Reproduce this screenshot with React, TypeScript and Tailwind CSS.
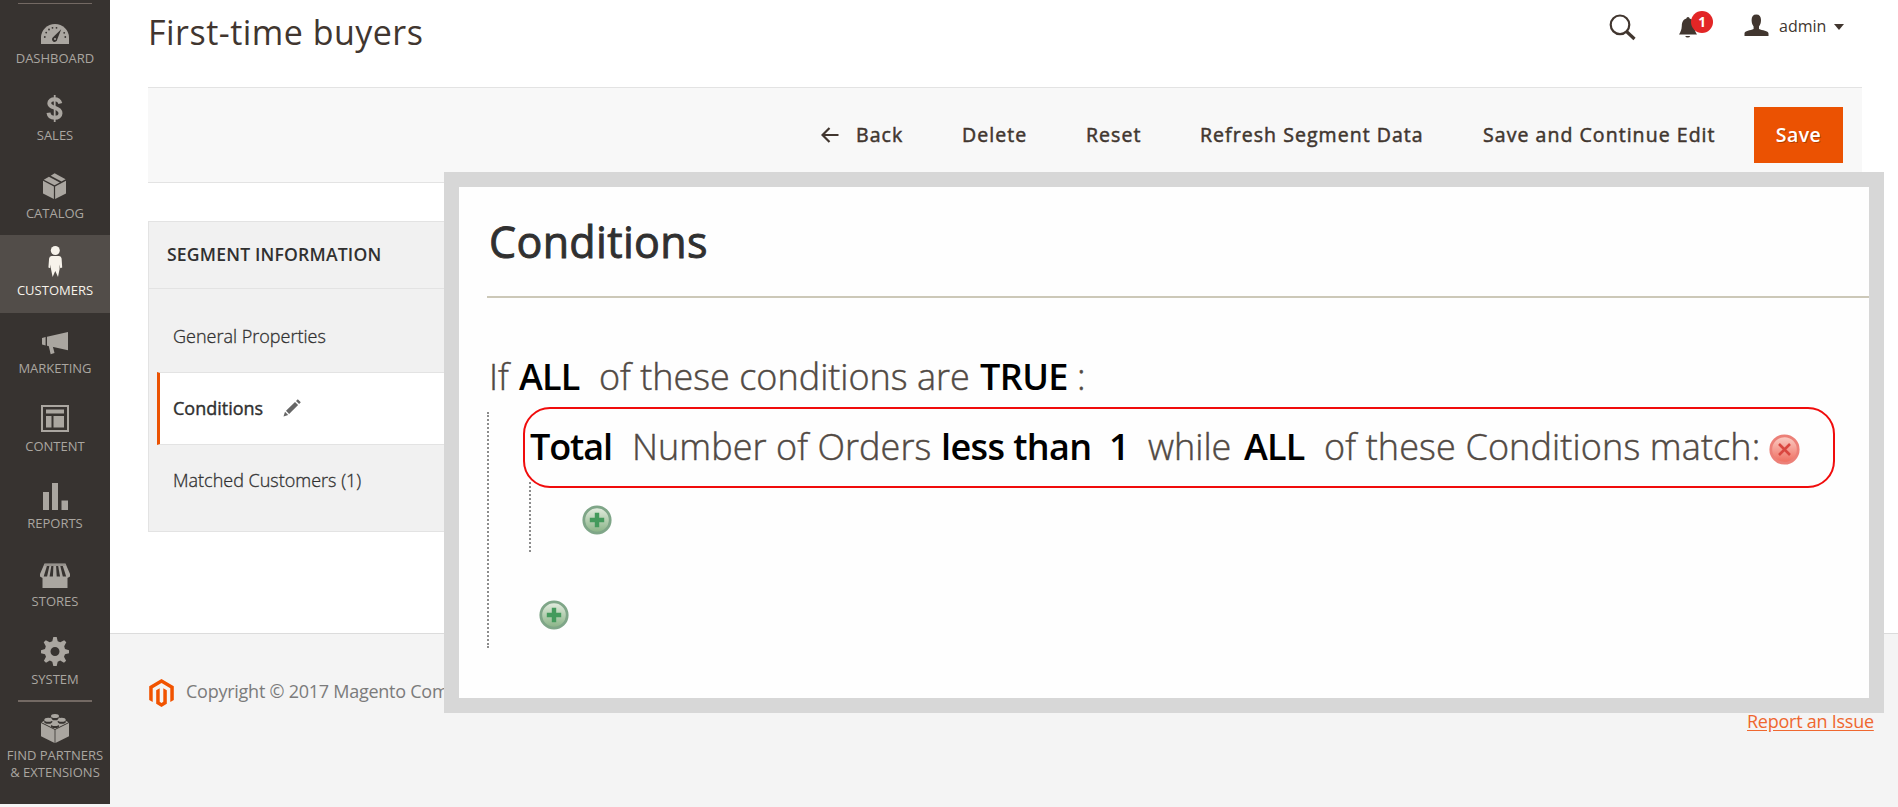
import type { ReactNode } from "react";

const DashboardIcon = () => (
  <>
    <path fill="currentColor" d="M2 32V25.500A14 13.500 0 0 1 30 25.500V32Z" />
    <g fill="#373330">
      <circle cx="5.800" cy="25" r="0.900" />
      <circle cx="7.200" cy="20.600" r="0.900" />
      <circle cx="10" cy="17.500" r="0.900" />
      <circle cx="13.500" cy="15.800" r="0.900" />
      <circle cx="17.500" cy="15.800" r="0.900" />
      <circle cx="25.200" cy="20.800" r="0.900" />
      <circle cx="26.300" cy="25" r="0.900" />
      <path d="M22.200 17.200L18.200 27.500A2.600 2.600 0 1 1 14 25.300Z" />
    </g>
    <circle cx="16" cy="27" r="1" fill="currentColor" />
  </>
);

const SalesIcon = () => (
  <g fill="none" stroke="currentColor">
    <path strokeWidth="4" d="M21.300 13.600C20.500 10.500 18.500 9.300 15.500 9.300C12.500 9.300 10.300 10.700 10.300 13.200C10.300 19 21.500 16.400 21.500 23.300C21.500 26.200 19 27.800 15.700 27.800C12 27.800 9.900 26 9.500 22.800" />
    <path strokeWidth="1.800" d="M15.700 5V32" />
  </g>
);

const CatalogIcon = () => (
  <g fill="currentColor">
    <path d="M4 13.800L14.900 19.500V32L4 26.500Z" />
    <path d="M27 13.800L16.100 19.500V32L27 26.500Z" />
    <path d="M4.800 12.700L9.900 9.800L20.800 15.500L15.500 18.300Z" />
    <path d="M11.700 8.800L15.600 6.300L26.600 12.300L22.500 14.600Z" />
  </g>
);

const CustomersIcon = () => (
  <g fill="currentColor">
    <circle cx="16.300" cy="5.500" r="4.500" />
    <path d="M12.500 11H20.200Q22.300 11 22.600 13.500L23.200 22.500L21.300 23.200L20.600 19.500V24L19 32L16.300 26L13.600 32L12 24V19.500L11.300 23.200L9.400 22.500L10.100 13.500Q10.400 11 12.500 11Z" />
  </g>
);

const MarketingIcon = () => (
  <g fill="currentColor">
    <path d="M3 15L6.600 14V22.500L3 21.500Z" />
    <path d="M8 13.700L29 9V27.300L15.500 24.200L11.500 23.400L8 22.700Z" />
    <path d="M9.500 22L13.700 23L15.500 30L11.700 31.200Z" />
  </g>
);

const ContentIcon = () => (
  <g fill="currentColor">
    <path fillRule="evenodd" d="M2 5H30V32H2ZM4 7V30H28V7Z" />
    <path d="M7 9.500H25V13.500H7ZM7 16H12.500V27.500H7ZM14.500 16H25V27.500H14.500Z" />
  </g>
);

const ReportsIcon = () => (
  <path fill="currentColor" d="M4 14H10V32H4ZM13 5H19V32H13ZM22.500 22.500H29V32H22.500Z" />
);

const StoresIcon = () => (
  <>
    <path fill="currentColor" d="M5.500 7.500H26.500L31 18V20.500L28.500 22V32H3.500V22L1 20.500V18Z" />
    <g fill="#373330">
      <path d="M7.900 10H10.400L8.100 20.500H4.700Z" />
      <path d="M12.300 10H14.400L13.900 20.500H10.600Z" />
      <path d="M17.100 10H19.200L21 20.500H17.700Z" />
      <path d="M21.300 10H23.800L27.200 20.500H23.800Z" />
    </g>
    <path d="M5.500 9H26.500" stroke="#77726c" strokeWidth="0.800" />
  </>
);

const SystemIcon = () => (
  <g fill="currentColor">
    <path
      fillRule="evenodd"
      d="M14.300 4H17.700L18.700 8.200L21.300 9.300L25.200 7.200L27.300 9.300L25.200 13.200L26 16L30 17.200V20.200L26 21.300L25 23.800L27.100 27.700L25 29.800L21.200 27.600L18.700 28.700L17.700 33H14.300L13.300 28.700L10.800 27.600L7 29.800L4.900 27.700L7 23.800L6 21.300L2 20.200V17.200L6 16L6.800 13.200L4.700 9.300L6.800 7.200L10.700 9.300L13.300 8.200ZM16 14A4.500 4.500 0 1 0 16 23A4.500 4.500 0 1 0 16 14Z"
    />
  </g>
);

const PartnersIcon = () => (
  <>
    <path fill="currentColor" d="M2 13L15.600 19.700V33L2 26.300ZM30 13L16.400 19.700V33L30 26.300Z" />
    <path fill="currentColor" d="M2.500 12.200L16 5.500L29.500 12.200L16 18.900Z" />
    <g fill="#373330">
      <ellipse cx="16" cy="8.200" rx="4.100" ry="2" />
      <ellipse cx="9.300" cy="11.800" rx="4.100" ry="2" />
      <ellipse cx="22.700" cy="11.800" rx="4.100" ry="2" />
      <ellipse cx="16" cy="15.900" rx="4.100" ry="2" />
    </g>
    <g fill="currentColor">
      <ellipse cx="16" cy="6" rx="4" ry="2" />
      <ellipse cx="9.300" cy="9.800" rx="4" ry="2" />
      <ellipse cx="22.700" cy="9.800" rx="4" ry="2" />
      <ellipse cx="16" cy="13.900" rx="4" ry="2" />
    </g>
  </>
);

const NAV: { label: string; icon: ReactNode; active?: boolean }[] = [
  { label: "DASHBOARD", icon: <DashboardIcon /> },
  { label: "SALES", icon: <SalesIcon /> },
  { label: "CATALOG", icon: <CatalogIcon /> },
  { label: "CUSTOMERS", icon: <CustomersIcon />, active: true },
  { label: "MARKETING", icon: <MarketingIcon /> },
  { label: "CONTENT", icon: <ContentIcon /> },
  { label: "REPORTS", icon: <ReportsIcon /> },
  { label: "STORES", icon: <StoresIcon /> },
  { label: "SYSTEM", icon: <SystemIcon /> },
];

function NavItem({ label, icon, active }: { label: ReactNode; icon: ReactNode; active?: boolean }) {
  return (
    <a
      className={`flex h-[77.67px] shrink-0 flex-col items-center pt-[10px] text-center text-[13px] leading-[17px] whitespace-nowrap ${
        active ? "bg-[#524d49] text-[#f7f3eb]" : "text-[#aaa6a0]"
      }`}
    >
      <svg width="32" height="36" viewBox="0 0 32 36" className="mb-[1.500px] shrink-0">
        {icon}
      </svg>
      <span>{label}</span>
    </a>
  );
}

function Sidebar() {
  return (
    <nav className="flex h-[804px] w-[110px] shrink-0 flex-col bg-[#373330]">
      <div className="mx-[18px] mt-[3px] h-px shrink-0 bg-[#736963]" />
      <div className="-mt-[2px] flex flex-col">
        {NAV.map((item) => (
          <NavItem key={item.label} {...item} />
        ))}
      </div>
      <div className="mx-[18px] -mt-px h-[2px] shrink-0 bg-[#736963]" />
      <div className="-mt-[2px]">
        <NavItem
          icon={<PartnersIcon />}
          label={
            <>
              FIND PARTNERS
              <br />
              &amp; EXTENSIONS
            </>
          }
        />
      </div>
    </nav>
  );
}

function Header() {
  return (
    <header className="flex h-[87px] items-start text-[#41362f]">
      <h1 className="ml-[38px] w-[1461px] pt-[9px] text-[34px] leading-[46px] tracking-[0.480px]">First-time buyers</h1>
      <svg width="27" height="27" viewBox="0 0 27 27" className="mt-[14px] shrink-0" fill="none" stroke="currentColor">
        <circle cx="11" cy="10.800" r="9.300" strokeWidth="2.200" />
        <path d="M17.500 17.500L25.500 25" strokeWidth="3.200" />
      </svg>
      <div className="relative mt-[16px] ml-[42px] h-[24px] w-[36px] shrink-0">
        <svg width="20" height="24" viewBox="0 0 20 24" fill="currentColor">
          <path d="M10 1C11 1 11.500 1.800 11.600 2.500C15 3.500 16 6 16.200 10C16.400 14 17.500 16 19 18.500H1C2.500 16 3.600 14 3.800 10C4 6 5 3.500 8.400 2.500C8.500 1.800 9 1 10 1Z" />
          <path d="M7.200 20H12.200A2.600 2.200 0 0 1 7.200 20Z" />
        </svg>
        <span className="absolute -top-[5px] left-[13px] flex size-[22px] items-center justify-center rounded-full bg-[#e22626] text-[13.500px] font-bold text-white">
          1
        </span>
      </div>
      <svg width="25" height="22" viewBox="0 0 25 22" fill="currentColor" className="mt-[14px] ml-[30px] shrink-0">
        <path d="M12.300 0.500C15.500 0.500 17 2.500 17 6C17 9.500 16 11 15 12.500V15C18 16.500 24.500 16.800 24.500 19.500V22H0.500V19.500C0.500 16.800 6.600 16.500 9.600 15V12.500C8.600 11 7.600 9.500 7.600 6C7.600 2.500 9.100 0.500 12.300 0.500Z" />
      </svg>
      <span className="mt-[15px] ml-[10px] w-[55px] shrink-0 text-[16px] leading-[22px]">admin</span>
      <svg width="10" height="6" viewBox="0 0 10 6" fill="currentColor" className="mt-[24px] shrink-0">
        <path d="M0 0H10L5 6Z" />
      </svg>
    </header>
  );
}

function Toolbar() {
  return (
    <div className="ml-[38px] flex h-[96px] w-[1714px] items-center border-y border-[#e3e3e3] bg-[#f8f8f8] pl-[673px] text-[19.500px] leading-[26px] tracking-[1.050px] whitespace-nowrap text-[#41362f] [-webkit-text-stroke:0.500px_#41362f]">
      <svg width="18" height="16" viewBox="0 0 18 16" fill="none" stroke="currentColor" strokeWidth="2.200" className="mr-[17px] shrink-0">
        <path d="M17.500 8H1.500M8.500 1L1.500 8L8.500 15" />
      </svg>
      <span className="w-[106px] shrink-0">Back</span>
      <span className="w-[124px] shrink-0">Delete</span>
      <span className="w-[114px] shrink-0">Reset</span>
      <span className="w-[283px] shrink-0">Refresh Segment Data</span>
      <span className="w-[271px] shrink-0">Save and Continue Edit</span>
      <button className="flex h-[56px] w-[89px] shrink-0 items-center justify-center bg-[#eb5202] font-semibold tracking-[0.500px] text-white [-webkit-text-stroke:0] [text-shadow:1px_1px_0_rgba(0,0,0,0.25)]">
        Save
      </button>
    </div>
  );
}

function SegmentPanel() {
  return (
    <aside className="mt-[38px] ml-[38px] h-[311px] w-[340px] border border-[#e3e3e3] bg-[#f1f1f1] text-[18px] text-[#303030]">
      <div className="flex h-[67px] items-center border-b border-[#e3e3e3] pb-px pl-[18px] text-[17.600px] font-semibold tracking-[0.180px]">
        SEGMENT INFORMATION
      </div>
      <div className="pt-[12px] pl-[8px]">
        <div className="flex h-[71px] items-center pl-[16px] font-light [-webkit-text-stroke:0.300px_#303030]">General Properties</div>
        <div className="flex h-[73px] items-center border-y border-l-3 border-y-[#e3e3e3] border-l-[#eb5202] bg-white pl-[13px] [-webkit-text-stroke:0.400px_#303030]">
          Conditions
          <svg width="18" height="18" viewBox="0 0 18 18" fill="#666" className="mb-[2px] ml-[20px]">
            <path d="M0.500 17.500L2 12.800L5.200 16ZM3 11.800L12 2.900L15.100 6L6.100 15ZM13 2L14.800 0.300L17.800 3.300L16.100 5Z" />
          </svg>
        </div>
        <div className="flex h-[71px] items-center pl-[16px] font-light [-webkit-text-stroke:0.300px_#303030]">Matched Customers (1)</div>
      </div>
    </aside>
  );
}

function Footer() {
  return (
    <footer className="mt-[101px] flex h-[174px] items-start border-t border-[#dcdcdc] bg-[#f4f4f4] text-[18px] leading-[26px] tracking-[-0.250px] text-[#7b7b7b]">
      <svg width="25" height="28" viewBox="0 0 25 28" fill="#f15300" className="mt-[45px] ml-[39px] shrink-0">
        <path d="M12.500 0L24.800 7.200V21L21.300 23V9.200L12.500 4.100L3.700 9.200V23L0.200 21V7.200Z" />
        <path d="M7.200 11.300L10.700 9.300V22.800L12.500 24L14.300 22.800V9.300L17.800 11.300V24.800L12.500 28L7.200 24.800Z" />
      </svg>
      <span className="mt-[44px] ml-[12px] w-[1561px] shrink-0">Copyright © 2017 Magento Commerce Inc. All rights reserved.</span>
      <a className="mt-[74px] shrink-0 text-[#ef672f] underline underline-offset-2">Report an Issue</a>
    </footer>
  );
}

function AddIcon({ id }: { id: string }) {
  return (
    <svg width="30" height="30" viewBox="0 0 30 30" className="shrink-0">
      <defs>
        <linearGradient id={id} x1="0" y1="0" x2="0" y2="1">
          <stop offset="0" stopColor="#e6eee2" />
          <stop offset="1" stopColor="#86b183" />
        </linearGradient>
      </defs>
      <circle cx="15" cy="15" r="13.200" fill={`url(#${id})`} stroke="#7fa688" strokeWidth="2.800" />
      <path d="M12.800 7.800H17.200V12.800H22.200V17.200H17.200V22.200H12.800V17.200H7.800V12.800H12.800Z" fill="#449a5c" />
    </svg>
  );
}

function RemoveIcon() {
  return (
    <svg width="31" height="31" viewBox="0 0 31 31" className="shrink-0">
      <defs>
        <linearGradient id="remove" x1="0" y1="0" x2="0" y2="1">
          <stop offset="0" stopColor="#fbd0c8" />
          <stop offset="1" stopColor="#ee6a5c" />
        </linearGradient>
      </defs>
      <circle cx="15.500" cy="15.500" r="13.700" fill="url(#remove)" stroke="#ec8078" strokeWidth="2.800" />
      <path d="M10 10L21 21M21 10L10 21" stroke="#d9463f" strokeWidth="2.600" />
    </svg>
  );
}

function ConditionsPanel() {
  return (
    <section className="absolute top-[172px] left-[444px] h-[541px] w-[1440px] border-[15px] border-[#d7d7d7] bg-[#fefefe] text-[36px] leading-[48px] font-light whitespace-nowrap text-[#514943] [-webkit-text-stroke:0.450px_#514943]">
      <h2 className="ml-[28px] flex h-[111px] items-center border-b-2 border-[#ccc8b8] pl-[2px] text-[43px] font-normal tracking-[0.350px] text-[#303030] [-webkit-text-stroke:0.900px_#303030]">
        Conditions
      </h2>
      <div className="mt-[55px] ml-[30px] flex [&>b]:[-webkit-text-stroke:0]">
        <span className="w-[30px]">If</span>
        <b className="w-[80px] font-semibold tracking-[-0.800px] text-black">ALL</b>
        <span className="w-[381px]">of these conditions are</span>
        <b className="w-[97px] font-semibold tracking-[-0.600px] text-black">TRUE</b>
        <span>:</span>
      </div>
      <div className="mt-[11px] ml-[28px] flex h-[236px] flex-col border-l-2 border-dotted border-[#8c8c8c]">
        <div className="relative z-10 -mt-[5px] ml-[34px] flex h-[81px] w-[1312px] shrink-0 items-center rounded-[27px] border-2 border-[#f00c0c] bg-[#fefefe] pb-[2px] pl-[5px] [&>b]:[-webkit-text-stroke:0]">
          <b className="w-[102px] shrink-0 font-semibold tracking-[-1.100px] text-black">Total</b>
          <span className="w-[309px] shrink-0 tracking-[0.060px]">Number of Orders</span>
          <b className="w-[168px] shrink-0 font-semibold tracking-[-0.600px] text-black">less than</b>
          <b className="w-[39px] shrink-0 font-semibold text-black">1</b>
          <span className="w-[96px] shrink-0">while</span>
          <b className="w-[80px] shrink-0 font-semibold tracking-[-0.800px] text-black">ALL</b>
          <span className="w-[445px] shrink-0 tracking-[0.130px]">of these Conditions match:</span>
          <div className="pt-[6px]">
            <RemoveIcon />
          </div>
        </div>
        <div className="-mt-[6px] ml-[40px] flex h-[70px] shrink-0 items-center border-l-2 border-dotted border-[#8c8c8c] pt-[6px] pl-[51px]">
          <AddIcon id="add-inner" />
        </div>
        <div className="mt-[48px] ml-[50px]">
          <AddIcon id="add-outer" />
        </div>
      </div>
    </section>
  );
}

export default function App() {
  return (
    <div className="relative flex h-[807px] w-[1898px] overflow-hidden bg-white font-['Open_Sans',sans-serif]">
      <div className="h-[807px] bg-[#f4f4f4]">
        <Sidebar />
      </div>
      <main className="w-[1788px] shrink-0">
        <Header />
        <Toolbar />
        <SegmentPanel />
        <Footer />
      </main>
      <ConditionsPanel />
    </div>
  );
}
